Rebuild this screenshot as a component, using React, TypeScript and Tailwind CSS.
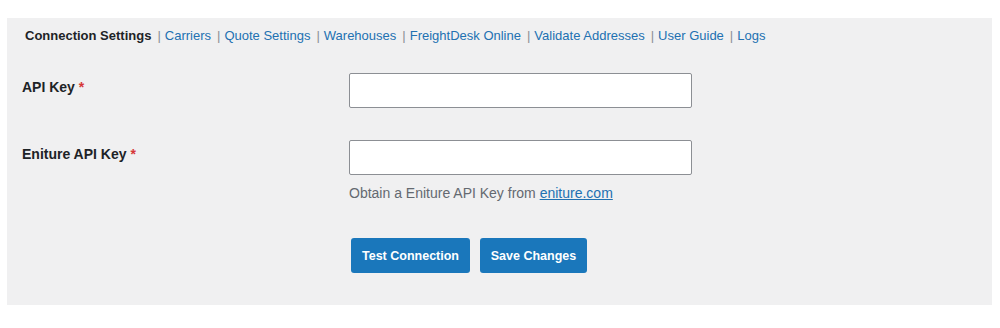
const tabs = [
  "Carriers",
  "Quote Settings",
  "Warehouses",
  "FreightDesk Online",
  "Validate Addresses",
  "User Guide",
  "Logs",
];

function Field({ label, children }: { label: string; children: React.ReactNode }) {
  return (
    <div className="flex">
      <div className="w-[342px] pt-[4px] pl-[15px] text-[14px] leading-[20px] font-bold text-[#1d2327]">
        {label} <span className="text-[#d63638]">*</span>
      </div>
      <div className="flex flex-col">{children}</div>
    </div>
  );
}

export default function App() {
  return (
    <div
      className="h-[328px] w-[1000px] bg-white pt-[18px] pl-[7px]"
      style={{ fontFamily: '"Liberation Sans", Arial, sans-serif' }}
    >
      <div className="h-[287px] w-[985px] bg-[#f0f0f1]">
        <nav className="flex items-center pt-[8px] pl-[18px] text-[13px] leading-[20px]">
          <span className="font-bold text-[#1d2327]">Connection Settings</span>
          {tabs.map((t) => (
            <span key={t} className="flex items-center">
              <span className="ml-[6px] mr-[4px] text-[#8c8f94]">|</span>
              <a href="#" className="text-[#2271b1]">
                {t}
              </a>
            </span>
          ))}
        </nav>

        <div className="mt-[27px] flex flex-col gap-[32px]">
          <Field label="API Key">
            <input className="h-[35px] w-[343px] rounded-[2px] border border-[#8c8f94] bg-white" />
          </Field>
          <Field label="Eniture API Key">
            <input className="h-[35px] w-[343px] rounded-[2px] border border-[#8c8f94] bg-white" />
            <p className="mt-[8px] text-[14px] leading-[20px] text-[#646970]">
              Obtain a Eniture API Key from{" "}
              <a href="#" className="text-[#2271b1] underline">
                eniture.com
              </a>
            </p>
            <div className="mt-[35px] ml-[2px] flex gap-[10px]">
              <button className="h-[35px] w-[119px] rounded-[3px] bg-[#1a77bb] pt-[1px] text-[12.5px] font-bold text-white">
                Test Connection
              </button>
              <button className="h-[35px] w-[107px] rounded-[3px] bg-[#1a77bb] pt-[1px] text-[12.5px] font-bold text-white">
                Save Changes
              </button>
            </div>
          </Field>
        </div>
      </div>
    </div>
  );
}
